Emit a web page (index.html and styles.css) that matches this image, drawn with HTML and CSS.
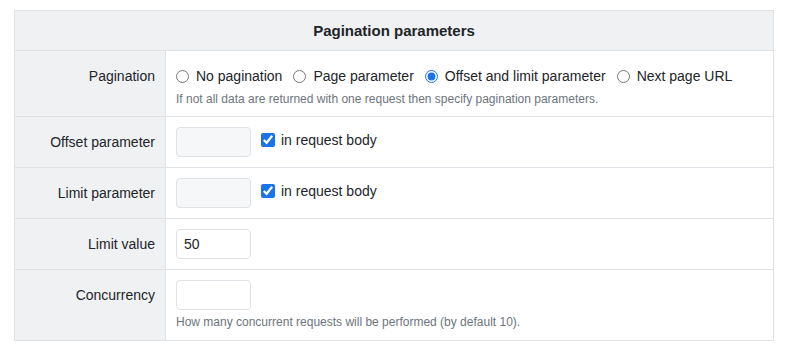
FILE: index.html
```html
<!DOCTYPE html>
<html>
	<head>
		<meta charset="utf-8">
		<title>Pagination parameters</title>
		<link rel="stylesheet" href="styles.css">
	</head>
	<body>
		<div class="page">
			<table class="params">
				<thead>
					<tr>
						<th colspan="2" class="params-title">Pagination parameters</th>
					</tr>
				</thead>
				<tbody>
					<tr>
						<td class="label">Pagination</td>
						<td class="value value-pagination">
							<div class="radios">
								<label class="radio"><input type="radio" name="pg"> No pagination</label>
								<label class="radio"><input type="radio" name="pg"> Page parameter</label>
								<label class="radio"><input type="radio" name="pg" checked> Offset and limit parameter</label>
								<label class="radio"><input type="radio" name="pg"> Next page URL</label>
							</div>
							<div class="help">If not all data are returned with one request then specify pagination parameters.</div>
						</td>
					</tr>
					<tr>
						<td class="label">Offset parameter</td>
						<td class="value">
							<div class="field-line">
								<input type="text" class="input input-muted">
								<label class="check"><input type="checkbox" checked> in request body</label>
							</div>
						</td>
					</tr>
					<tr>
						<td class="label">Limit parameter</td>
						<td class="value">
							<div class="field-line">
								<input type="text" class="input input-muted">
								<label class="check"><input type="checkbox" checked> in request body</label>
							</div>
						</td>
					</tr>
					<tr>
						<td class="label">Limit value</td>
						<td class="value">
							<input type="text" class="input" value="50">
						</td>
					</tr>
					<tr>
						<td class="label">Concurrency</td>
						<td class="value value-help">
							<input type="text" class="input">
							<div class="help help-concurrency">How many concurrent requests will be performed (by default 10).</div>
						</td>
					</tr>
				</tbody>
			</table>
		</div>
	</body>
</html>
```

FILE: styles.css
```css
html,
body {
	margin: 0;
	background-color: #ffffff;
	font-family: "Liberation Sans", Arial, sans-serif;
	font-size: 14px;
	color: #212529;
}

.page {
	padding: 10px 14px 0 14px;
}

.params {
	width: 760px;
	border-collapse: collapse;
	border: 1px solid #dee2e6;
}

.params td,
.params th {
	border: 1px solid #dee2e6;
}

.params-title {
	background-color: #f0f1f3;
	height: 39px;
	padding: 0;
	font-size: 15px;
	font-weight: bold;
	text-align: center;
	vertical-align: middle;
}

.label {
	width: 140px;
	background-color: #f0f1f3;
	text-align: right;
	vertical-align: top;
	padding: 10px 10px 0 0;
	line-height: 30px;
	white-space: nowrap;
}

.value {
	padding: 10px 10px 10px 10px;
	vertical-align: top;
}

.value-pagination {
	padding: 13px 10px 8px 10px;
}

.value-help {
	padding-bottom: 9px;
}

.radios {
	display: flex;
	align-items: center;
	gap: 11px;
	height: 24px;
}

.radio {
	display: flex;
	align-items: center;
	gap: 7px;
}

.radio input {
	margin: 0;
	width: 13px;
	height: 13px;
	accent-color: #1a73e8;
}

.help {
	margin-top: 2px;
	font-size: 12px;
	line-height: 18px;
	color: #6c757d;
}

.help-concurrency {
	margin-top: 3px;
}

.field-line {
	display: flex;
	align-items: center;
	gap: 10px;
}

.input {
	display: block;
	box-sizing: border-box;
	width: 75px;
	height: 30px;
	margin: 0;
	padding: 0 7px;
	border: 1px solid #dee2e6;
	border-radius: 4px;
	background-color: #ffffff;
	font-family: inherit;
	font-size: 14px;
	color: #212529;
}

.input-muted {
	background-color: #f6f7f8;
}

.check {
	display: flex;
	align-items: center;
	gap: 6px;
	margin-top: -4px;
}

.check input {
	margin: 0;
	width: 14px;
	height: 14px;
	accent-color: #1a73e8;
}
```
